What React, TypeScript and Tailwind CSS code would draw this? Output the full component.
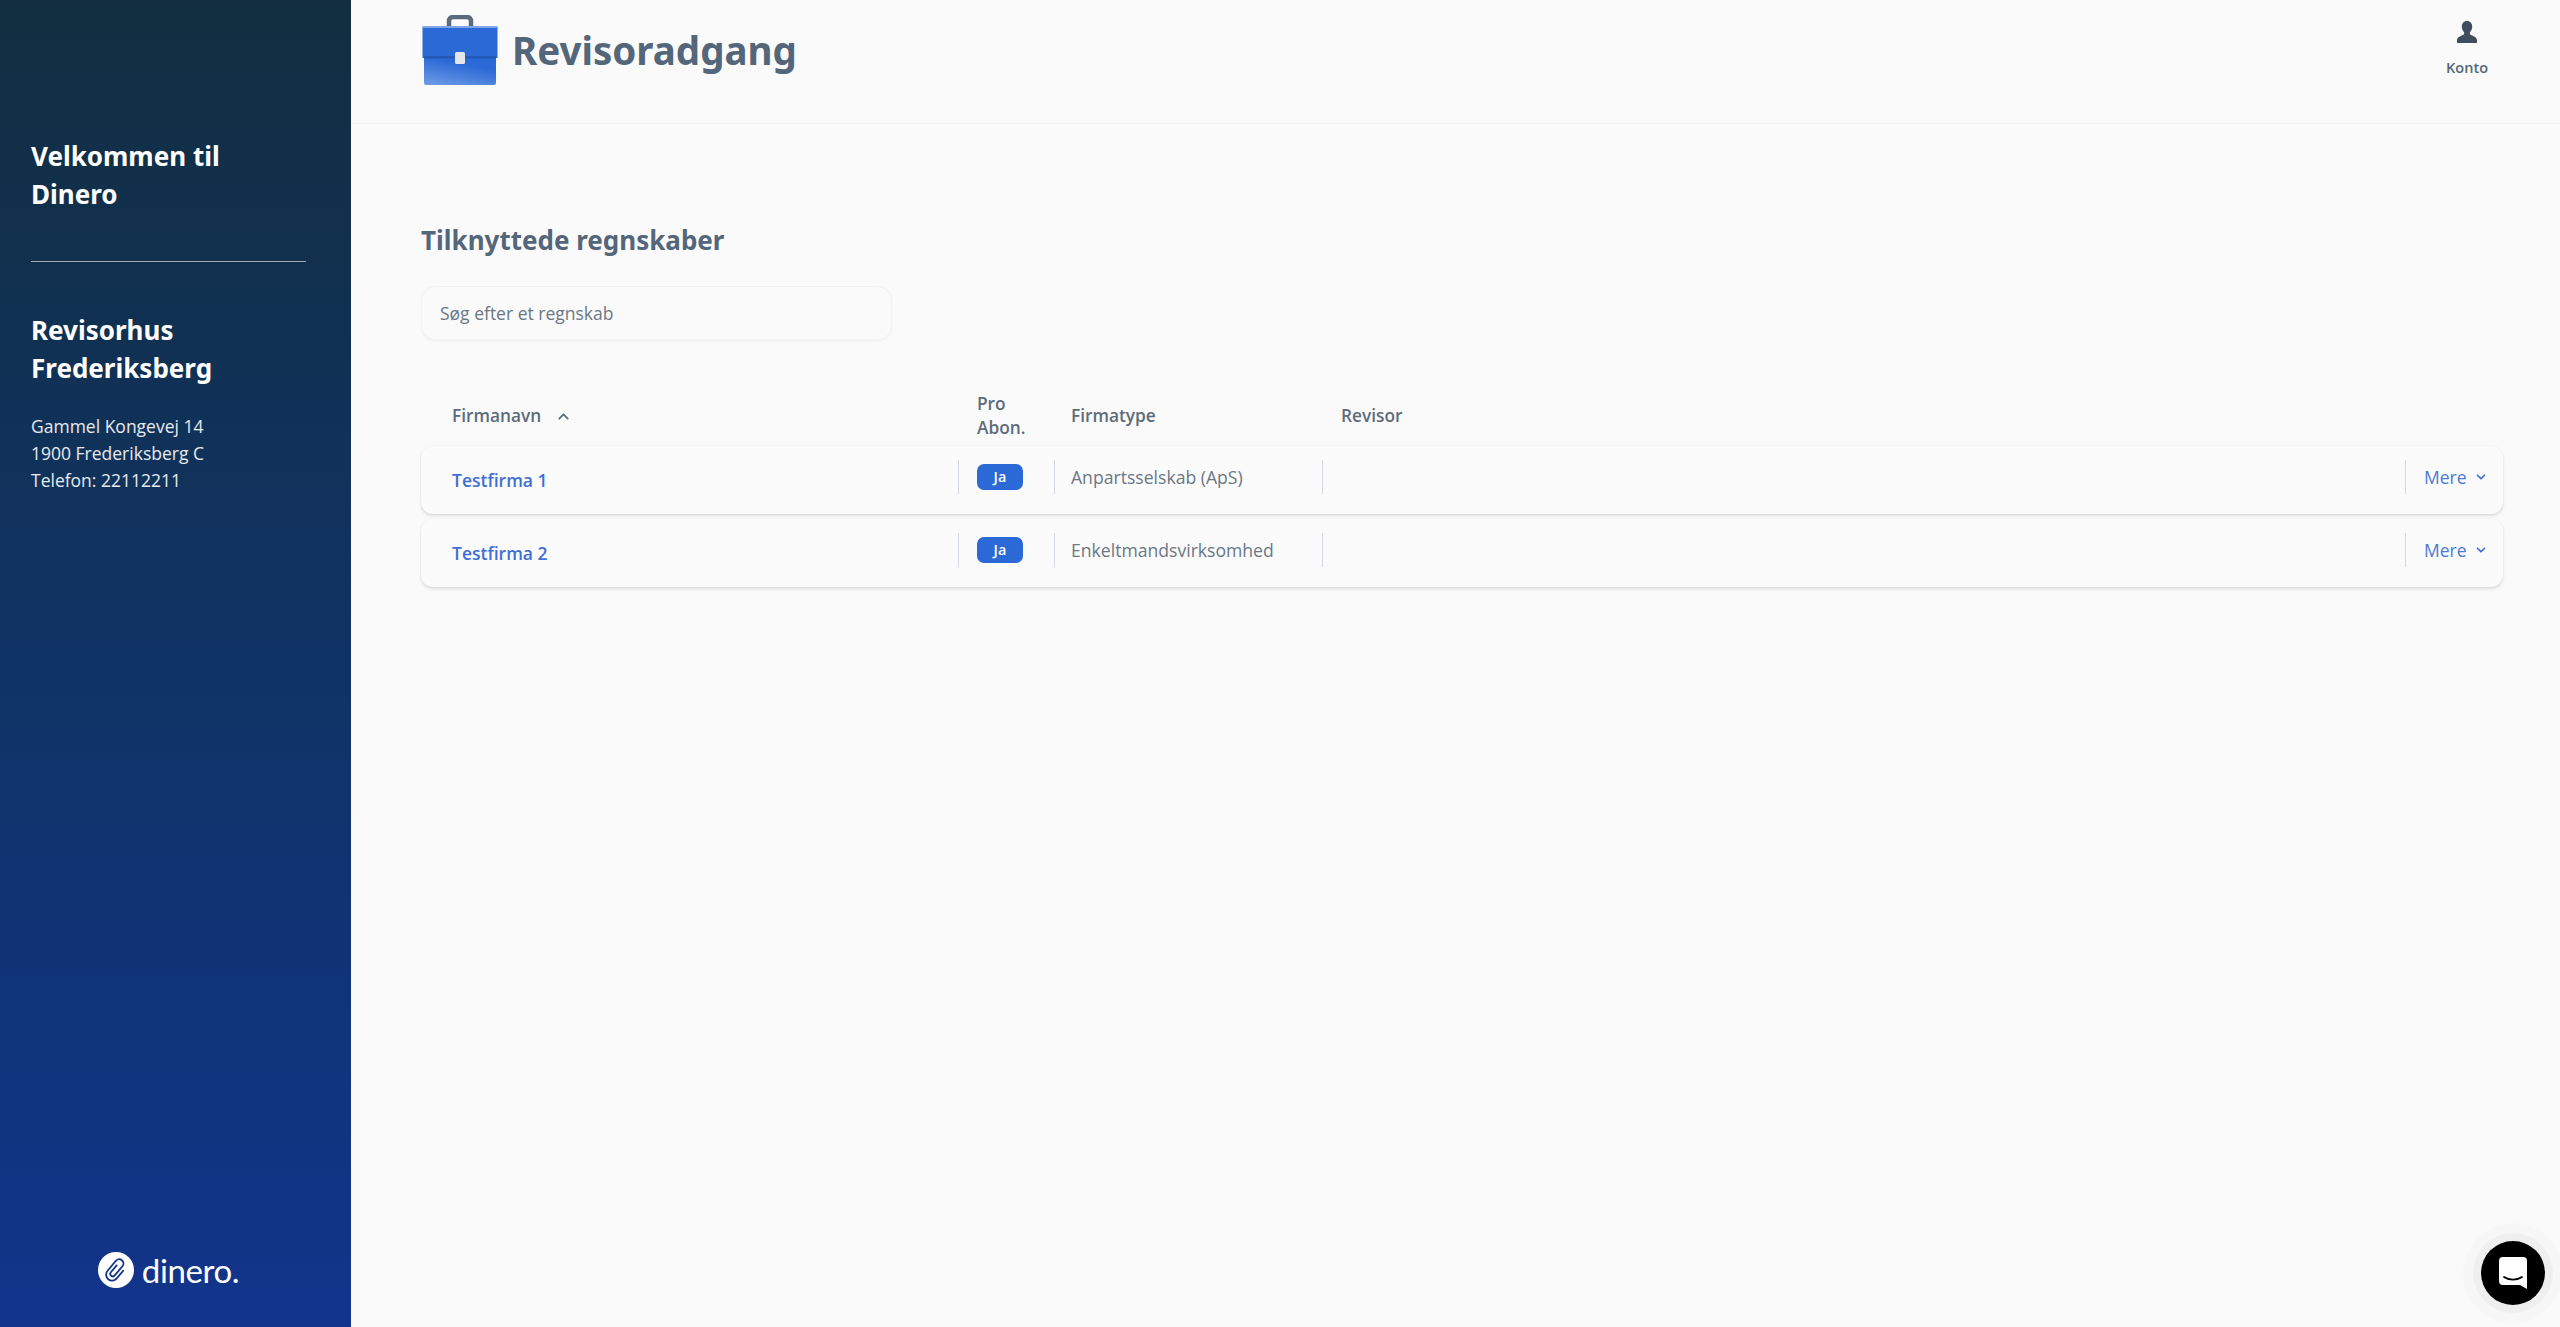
import React from "react";
import { ChevronDown, ChevronUp } from "lucide-react";

const HEADING = "font-['Noto_Sans',sans-serif]";

const rows = [
  { name: "Testfirma 1", type: "Anpartsselskab (ApS)" },
  { name: "Testfirma 2", type: "Enkeltmandsvirksomhed" },
];

const Briefcase = () => (
  <svg width="78" height="70" viewBox="0 0 78 70" className="shrink-0">
    <defs>
      <linearGradient id="caseBottom" x1="0" y1="1" x2="0.4" y2="0.2">
        <stop offset="0%" stopColor="#6f9ce6" />
        <stop offset="100%" stopColor="#2b69d6" />
      </linearGradient>
    </defs>
    <path d="M28 13V6a4 4 0 0 1 4-4h14a4 4 0 0 1 4 4v7" fill="none" stroke="#5b6b7c" strokeWidth="4.500" />
    <path d="M3 41h72v27a2 2 0 0 1-2 2H5a2 2 0 0 1-2-2z" fill="url(#caseBottom)" />
    <rect x="1.500" y="12" width="75" height="31" fill="#2b69d6" />
    <rect x="1.500" y="11" width="75" height="2" fill="#7ea6e8" />
    <rect x="3" y="41" width="72" height="2.500" fill="#2459b5" />
    <rect x="34" y="37" width="10" height="12" rx="1.500" fill="#e4e6e8" />
  </svg>
);

const DineroLogo = () => (
  <div className="flex items-center gap-[8px]">
    <svg width="36" height="36" viewBox="0 0 36 36">
      <circle cx="18" cy="18" r="18" fill="#fff" />
      <path
        d="M15.500 14V23a2.500 2.500 0 0 0 5 0V11a4.250 4.250 0 0 0-8.500 0V24a6 6 0 0 0 12 0V14"
        fill="none"
        stroke="#11338a"
        strokeWidth="1.800"
        strokeLinecap="round"
        transform="rotate(40 18 18)"
      />
    </svg>
    <span className="font-['Lato',sans-serif] text-[33px] leading-none tracking-[-0.4px] text-white">dinero.</span>
  </div>
);

const Sidebar = () => (
  <aside className="flex w-[351px] shrink-0 flex-col bg-gradient-to-b from-[#122e40] to-[#12348c] pl-[31px] pr-[45px] text-white">
    <div className="pt-[137px]">
      <h1 className={`${HEADING} text-[26px] font-bold leading-[38px]`}>
        Velkommen til
        <br />
        Dinero
      </h1>
      <div className="mt-[48px] h-px w-[275px] bg-white/60" />
      <h2 className={`${HEADING} mt-[49px] text-[26px] font-bold leading-[38px]`}>
        Revisorhus
        <br />
        Frederiksberg
      </h2>
      <p className="mt-[26px] text-[17.500px] leading-[27px] text-white/90">
        Gammel Kongevej 14
        <br />
        1900 Frederiksberg C
        <br />
        Telefon: 22112211
      </p>
    </div>
    <div className="mt-auto flex justify-center pb-[39px]">
      <DineroLogo />
    </div>
  </aside>
);

const Header = () => (
  <header className="flex h-[124px] items-start justify-between border-b border-[#f0f1f2] pl-[70px] pr-[72px]">
    <div className="flex items-center gap-[13px] pt-[15px]">
      <Briefcase />
      <span className={`${HEADING} text-[38.500px] font-bold leading-[70px] text-[#54667a]`}>Revisoradgang</span>
    </div>
    <div className="flex flex-col items-center pt-[20px]">
      <svg width="24" height="24" viewBox="0 0 24 24" fill="#3f4d5c">
        <path d="M12 1c-3.400 0-5.200 2.500-5.200 5.600 0 2.300.9 4.300 2.300 5.600v2.100c-1.600 1.300-7.100 2.400-7.100 5.900v2.300c0 .3.200.5.500.5h19c.3 0 .5-.2.500-.5v-2.300c0-3.500-5.500-4.600-7.100-5.900v-2.100c1.400-1.300 2.300-3.300 2.300-5.600C17.200 3.500 15.400 1 12 1z" />
      </svg>
      <span className="mt-[14px] text-[14.500px] font-semibold leading-[20px] text-[#54667a]">Konto</span>
    </div>
  </header>
);

const Divider = () => <div className="h-[34px] w-px shrink-0 bg-[#d5dae0]" />;

const Row = ({ name, type }: { name: string; type: string }) => (
  <div className="flex h-[68px] items-center rounded-[12px] bg-[#fbfbfc] pb-[6px] shadow-[0_2px_3px_rgba(40,50,60,0.14),0_0_2px_rgba(40,50,60,0.05)]">
    <a className="w-[537px] pl-[31px] pt-[7px] text-[17.500px] font-semibold text-[#3f6fd4]">{name}</a>
    <Divider />
    <div className="w-[95px] pl-[18px]">
      <span className="flex h-[26px] w-[46px] items-center justify-center rounded-[7px] bg-[#2b69d6] text-[14.500px] font-semibold text-white">
        Ja
      </span>
    </div>
    <Divider />
    <div className="w-[267px] pl-[16px] text-[17.600px] text-[#6a7785]">{type}</div>
    <Divider />
    <div className="flex-1" />
    <Divider />
    <div className="flex w-[97px] items-center gap-[7px] pl-[18px] text-[17.500px] text-[#4d78d6]">
      Mere
      <ChevronDown size={14} strokeWidth={3} className="text-[#3f6fd4]" />
    </div>
  </div>
);

const Main = () => (
  <main className="min-w-0 flex-1">
    <Header />
    <div className="pl-[70px] pr-[57px]">
      <h2 className={`${HEADING} mt-[96px] text-[26px] font-bold leading-[40px] text-[#54667a]`}>Tilknyttede regnskaber</h2>
      <div className="mt-[26px] flex h-[54px] w-[471px] items-center rounded-[14px] border border-[#f1f2f3] pl-[18px] text-[17.500px] text-[#6a7785] shadow-[0_1px_2px_rgba(40,50,60,0.06)]">
        Søg efter et regnskab
      </div>
      <div className="mt-[46px] flex h-[60px] items-center text-[17.300px] font-semibold leading-[24px] text-[#5d6b7a]">
        <div className="flex w-[538px] items-center gap-[14px] pl-[31px]">
          Firmanavn
          <ChevronUp size={17} strokeWidth={2.500} />
        </div>
        <div className="w-[96px] pl-[18px]">
          Pro
          <br />
          Abon.
        </div>
        <div className="w-[268px] pl-[16px]">Firmatype</div>
        <div className="pl-[18px]">Revisor</div>
      </div>
      <div className="flex flex-col gap-[5px]">
        {rows.map((r) => (
          <Row key={r.name} name={r.name} type={r.type} />
        ))}
      </div>
    </div>
  </main>
);

export default function App() {
  return (
    <div className="relative flex h-[1327px] overflow-hidden bg-[#fafafa] font-['Open_Sans','Noto_Sans',sans-serif]">
      <Sidebar />
      <Main />
      {/* chat launcher */}
      <button className="absolute bottom-[22px] right-[15px] flex h-[64px] w-[64px] items-center justify-center rounded-full bg-black shadow-[0_0_0_8px_rgba(0,0,0,0.03),0_0_0_18px_rgba(0,0,0,0.012)]">
        <svg width="28" height="32" viewBox="0 0 28 32">
          <path d="M4 0h20a4 4 0 0 1 4 4v28l-7-4H4a4 4 0 0 1-4-4V4a4 4 0 0 1 4-4z" fill="#fff" />
          <path d="M5 20c5 3.500 13 3.500 18 0" fill="none" stroke="#000" strokeWidth="1.800" strokeLinecap="round" />
        </svg>
      </button>
    </div>
  );
}
